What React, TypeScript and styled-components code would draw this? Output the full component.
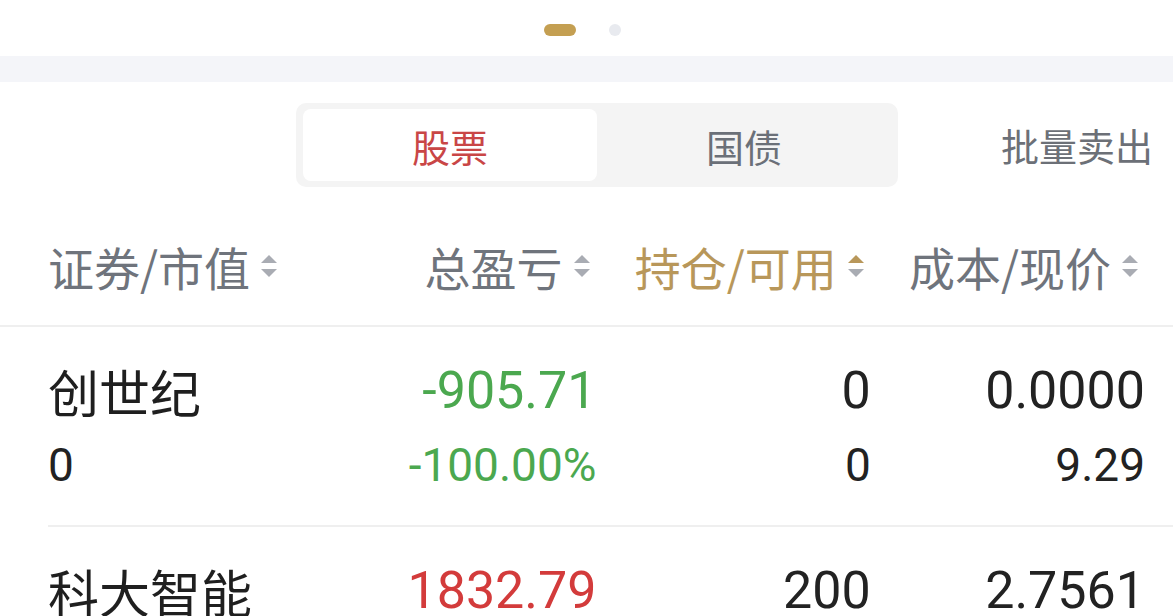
import React from 'react';
import styled, { createGlobalStyle } from 'styled-components';

const GlobalStyle = createGlobalStyle`
  html, body {
    margin: 0;
    padding: 0;
    background: #ffffff;
    font-family: "Noto Sans CJK SC", "Noto Sans", sans-serif;
    overflow: hidden;
  }
`;

const Page = styled.div`
  width: 1173px;
  height: 616px;
  overflow: hidden;
  background: #ffffff;
`;

const Indicator = styled.div`
  height: 56px;
  display: flex;
  align-items: center;
  justify-content: center;
  gap: 33px;
  padding: 3px 9px 0 0;
  box-sizing: border-box;
`;

const Dot = styled.span<{ active?: boolean }>`
  display: block;
  height: 12px;
  width: ${(p) => (p.active ? '32px' : '12px')};
  border-radius: 6px;
  background: ${(p) => (p.active ? '#c49f52' : '#e8eaef')};
`;

const Band = styled.div`
  height: 26px;
  background: #f4f5f9;
`;

const Toolbar = styled.div`
  display: grid;
  grid-template-columns: 296px 602px 1fr;
  align-items: center;
  margin-top: 21px;
  padding-right: 20px;
`;

const Segment = styled.div`
  grid-column: 2;
  display: flex;
  height: 84px;
  padding: 6px 7px;
  box-sizing: border-box;
  background: #f4f4f4;
  border-radius: 10px;
`;

const SegTab = styled.div<{ active?: boolean }>`
  flex: 1;
  display: flex;
  align-items: center;
  justify-content: center;
  border-radius: 8px;
  font-size: 38px;
  background: ${(p) => (p.active ? '#ffffff' : 'transparent')};
  color: ${(p) => (p.active ? '#c94646' : '#6b7078')};
`;

const SellButton = styled.div`
  justify-self: end;
  font-size: 38px;
  color: #6c7077;
  line-height: 44px;
`;

const TableHead = styled.div`
  display: grid;
  grid-template-columns: repeat(4, 1fr);
  padding: 57px 28px 37px 48px;
  border-bottom: 2px solid #efefef;
`;

const HeadCell = styled.div<{ align?: 'left' | 'right'; active?: boolean }>`
  display: flex;
  align-items: center;
  justify-content: ${(p) => (p.align === 'left' ? 'flex-start' : 'flex-end')};
  gap: 10px;
  padding-right: ${(p) => (p.align === 'left' ? '0' : '6px')};
  font-size: 46px;
  line-height: 44px;
  color: ${(p) => (p.active ? '#b8975a' : '#6f747c')};
`;

const Rows = styled.div`
  margin-left: 48px;
`;

const Row = styled.div`
  display: grid;
  grid-template-columns: repeat(4, 1fr);
  padding: 34px 28px 30px 0;
  border-bottom: 2px solid #efefef;
`;

const Cell = styled.div<{ align?: 'left' | 'right' }>`
  display: flex;
  flex-direction: column;
  gap: 14px;
  align-items: ${(p) => (p.align === 'left' ? 'flex-start' : 'flex-end')};
`;

type Tone = 'up' | 'down' | 'plain';

const toneColor = (t?: Tone) => {
  if (t === 'up') return '#d33b3b';
  if (t === 'down') return '#4ba84f';
  return '#222222';
};

const Name = styled.div`
  font-size: 51px;
  line-height: 60px;
  color: #1f1f1f;
  white-space: nowrap;
`;

const Main = styled.div<{ tone?: Tone }>`
  font-family: Roboto, "Noto Sans", sans-serif;
  font-size: 52px;
  line-height: 60px;
  color: ${(p) => toneColor(p.tone)};
  white-space: nowrap;
`;

const Sub = styled.div<{ tone?: Tone }>`
  font-family: Roboto, "Noto Sans", sans-serif;
  font-size: 46px;
  line-height: 60px;
  color: ${(p) => toneColor(p.tone)};
  white-space: nowrap;
`;

const SortIcon = ({ active }: { active?: boolean }) => (
  <svg width="18" height="24" viewBox="0 0 18 24">
    <polygon points="1,9 9,1 17,9" fill={active ? '#b8975a' : '#a9acb3'} />
    <polygon points="1,15 17,15 9,23" fill="#a9acb3" />
  </svg>
);

interface Holding {
  name: string;
  value: string;
  pnl: string;
  pnlPct: string;
  tone: Tone;
  hold: string;
  avail: string;
  cost: string;
  price: string;
}

const holdings: Holding[] = [
  { name: '创世纪', value: '0', pnl: '-905.71', pnlPct: '-100.00%', tone: 'down', hold: '0', avail: '0', cost: '0.0000', price: '9.29' },
  { name: '科大智能', value: '36400', pnl: '1832.79', pnlPct: '5.30%', tone: 'up', hold: '200', avail: '200', cost: '2.7561', price: '3.18' },
];

const App = () => (
  <Page>
    <GlobalStyle />
    <Indicator>
      <Dot active />
      <Dot />
    </Indicator>
    <Band />
    <Toolbar>
      <Segment>
        <SegTab active>股票</SegTab>
        <SegTab>国债</SegTab>
      </Segment>
      <SellButton>批量卖出</SellButton>
    </Toolbar>
    <TableHead>
      <HeadCell align="left">证券/市值<SortIcon /></HeadCell>
      <HeadCell>总盈亏<SortIcon /></HeadCell>
      <HeadCell active>持仓/可用<SortIcon active /></HeadCell>
      <HeadCell>成本/现价<SortIcon /></HeadCell>
    </TableHead>
    <Rows>
      {holdings.map((h) => (
        <Row key={h.name}>
          <Cell align="left">
            <Name>{h.name}</Name>
            <Sub>{h.value}</Sub>
          </Cell>
          <Cell>
            <Main tone={h.tone}>{h.pnl}</Main>
            <Sub tone={h.tone}>{h.pnlPct}</Sub>
          </Cell>
          <Cell>
            <Main>{h.hold}</Main>
            <Sub>{h.avail}</Sub>
          </Cell>
          <Cell>
            <Main>{h.cost}</Main>
            <Sub>{h.price}</Sub>
          </Cell>
        </Row>
      ))}
    </Rows>
  </Page>
);

export default App;
